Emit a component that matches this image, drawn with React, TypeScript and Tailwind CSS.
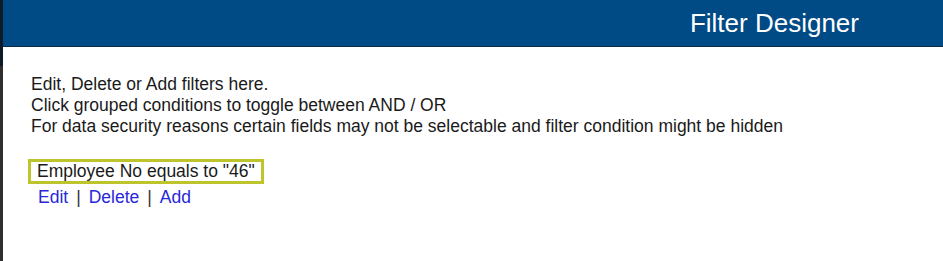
import React from 'react';

const FilterRow: React.FC<{ text: string }> = ({ text }) => (
    <div className="mt-[22px] ml-[-3px]">
        <div className="inline-block border-[3px] border-[#bdc42c] pl-[6px] pr-[6px] leading-[19px]">{text}</div>
        <div className="mt-[3px] ml-[10px] flex items-center gap-[8px]">
            <a className="text-[#2828d8] cursor-pointer">Edit</a>
            <span className="text-[#333]">|</span>
            <a className="text-[#2828d8] cursor-pointer">Delete</a>
            <span className="text-[#333]">|</span>
            <a className="text-[#2828d8] cursor-pointer">Add</a>
        </div>
    </div>
);

export default function App() {
    return (
        <div className="flex h-[261px] w-[943px] overflow-hidden bg-white" style={{ fontFamily: '"Liberation Sans", Arial, sans-serif' }}>
            <div className="flex w-[3px] flex-col">
                <div className="h-[66px] bg-[#0c1a2a]" />
                <div className="flex-1 bg-[#2e2e2e]" />
            </div>
            <div className="flex flex-1 flex-col">
                <header className="flex h-[46px] items-center justify-end bg-[#004a85] pr-[84px]">
                    <h1 className="text-[26px] text-white">Filter Designer</h1>
                </header>
                <div className="border-t border-[#0f2b4a]" />
                <main className="px-[28px] pt-[27px] text-[17.5px] leading-[21px] text-[#1a1a1a]">
                    <p>Edit, Delete or Add filters here.</p>
                    <p>Click grouped conditions to toggle between AND / OR</p>
                    <p>For data security reasons certain fields may not be selectable and filter condition might be hidden</p>
                    <FilterRow text={'Employee No equals to "46"'} />
                </main>
            </div>
        </div>
    );
}
